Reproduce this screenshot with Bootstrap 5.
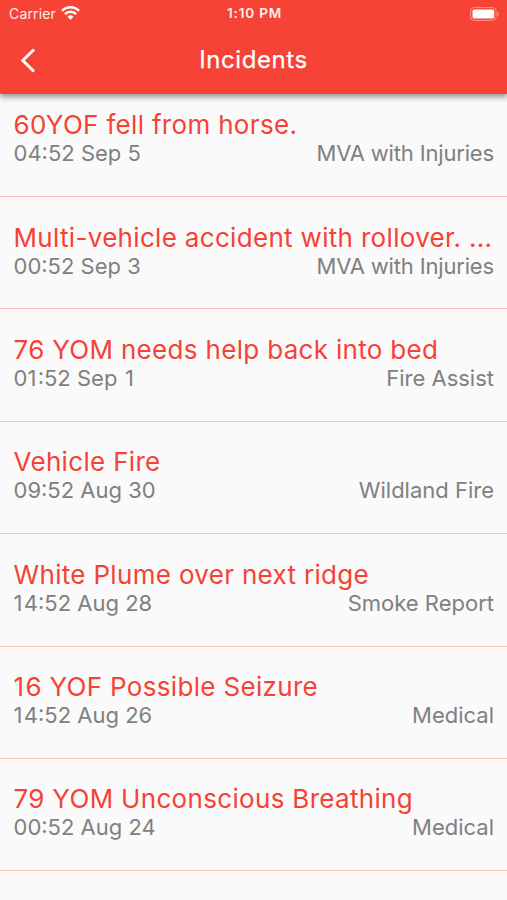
<!DOCTYPE html>
<html lang="en">
<head>
<meta charset="utf-8">
<meta name="viewport" content="width=device-width, initial-scale=1">
<title>Incidents</title>
<link href="https://cdn.jsdelivr.net/npm/bootstrap@5.3.0/dist/css/bootstrap.min.css" rel="stylesheet">
<style>
body{font-family:Inter,sans-serif;background:#fafafa;height:900px;overflow:hidden}
.app-header{background:#f64336;height:94px;box-shadow:0 3px 6px rgba(0,0,0,.42);position:relative}
.status-bar{height:27px;font-size:14px;line-height:27px;padding:0 7px 0 9px}
.carrier{letter-spacing:.15px;opacity:.9}
.wifi-icon{margin-left:5px;margin-top:-1px}
.status-bar .clock{font-weight:600;font-size:13.5px;letter-spacing:.8px;opacity:.92}
.title-bar{height:66px}
.back-icon{margin-left:17px;margin-top:-2px}
.page-title{font-size:24px;font-weight:400;line-height:30px;letter-spacing:.6px;-webkit-text-stroke:.25px #fff}
.incident{height:112.4px;padding:24.5px 13px 0 13.5px;border-bottom:1px solid #fbc0bb}
.incident:first-child{height:103px;padding-top:15px}
.incident-name{font-size:26px;font-weight:400;line-height:32px;color:#f44336;letter-spacing:.32px}
.incident-meta{font-size:22px;line-height:25px;color:#808080}
.kind-mva{letter-spacing:-.16px}
.one-gap{letter-spacing:1.3px}
</style>
</head>
<body>
<header class="app-header text-white">
<div class="status-bar row g-0">
<div class="col d-flex align-items-center"><span class="carrier">Carrier</span>
<svg class="wifi-icon" width="19" height="14" viewBox="0 0 19 14" fill="none" stroke="#fff" stroke-width="2.5"><path d="M1 4.900a12 12 0 0 1 17 0M3.900 8.100a8 8 0 0 1 11.200 0"/><path d="M6.500 10.700a4.300 4.300 0 0 1 6 0L9.500 13.800z" fill="#fff" stroke="none"/></svg></div>
<div class="col-auto clock">1:10 PM</div>
<div class="col d-flex justify-content-end align-items-center">
<svg width="30" height="14" viewBox="0 0 30 14"><rect x=".6" y=".6" width="25.500" height="12.800" rx="4" fill="none" stroke="#fff" stroke-opacity=".45"/><rect x="2.500" y="2.500" width="21.700" height="9" rx="1.800" fill="#fff"/><path d="M27.500 4.500q2.600 2.500 0 5z" fill="#fff" fill-opacity=".5"/></svg></div>
</div>
<div class="title-bar row g-0 align-items-center">
<div class="col"><svg class="back-icon" width="24" height="26" viewBox="0 0 24 26" fill="none" stroke="#fff" stroke-width="3"><path d="M17 2.500 5.800 13.500 17 24.500"/></svg></div>
<h1 class="page-title col-auto m-0">Incidents</h1><div class="col"></div>
</div>
</header>
<main>
<article class="incident"><h2 class="incident-name text-nowrap m-0">60YOF fell from horse.</h2><div class="incident-meta d-flex justify-content-between"><span>04:52 Sep 5</span><span class="kind-mva">MVA with Injuries</span></div></article>
<article class="incident"><h2 class="incident-name text-nowrap m-0">Multi-vehicle accident with rollover. ...</h2><div class="incident-meta d-flex justify-content-between"><span>00:52 Sep 3</span><span class="kind-mva">MVA with Injuries</span></div></article>
<article class="incident"><h2 class="incident-name text-nowrap m-0">76 YOM needs help back into bed</h2><div class="incident-meta d-flex justify-content-between"><span>0<span class="one-gap">1</span>:52 Sep<span class="one-gap"> </span>1</span><span>Fire Assist</span></div></article>
<article class="incident"><h2 class="incident-name text-nowrap m-0">Vehicle Fire</h2><div class="incident-meta d-flex justify-content-between"><span>09:52 Aug 30</span><span>Wildland Fire</span></div></article>
<article class="incident"><h2 class="incident-name text-nowrap m-0">White Plume over next ridge</h2><div class="incident-meta d-flex justify-content-between"><span><span class="one-gap">1</span>4:52 Aug 28</span><span>Smoke Report</span></div></article>
<article class="incident"><h2 class="incident-name text-nowrap m-0"><span class="one-gap">1</span>6 YOF Possible Seizure</h2><div class="incident-meta d-flex justify-content-between"><span><span class="one-gap">1</span>4:52 Aug 26</span><span>Medical</span></div></article>
<article class="incident"><h2 class="incident-name text-nowrap m-0">79 YOM Unconscious Breathing</h2><div class="incident-meta d-flex justify-content-between"><span>00:52 Aug 24</span><span>Medical</span></div></article>
</main>
<script src="https://cdn.jsdelivr.net/npm/bootstrap@5.3.0/dist/js/bootstrap.bundle.min.js"></script>
</body>
</html>
